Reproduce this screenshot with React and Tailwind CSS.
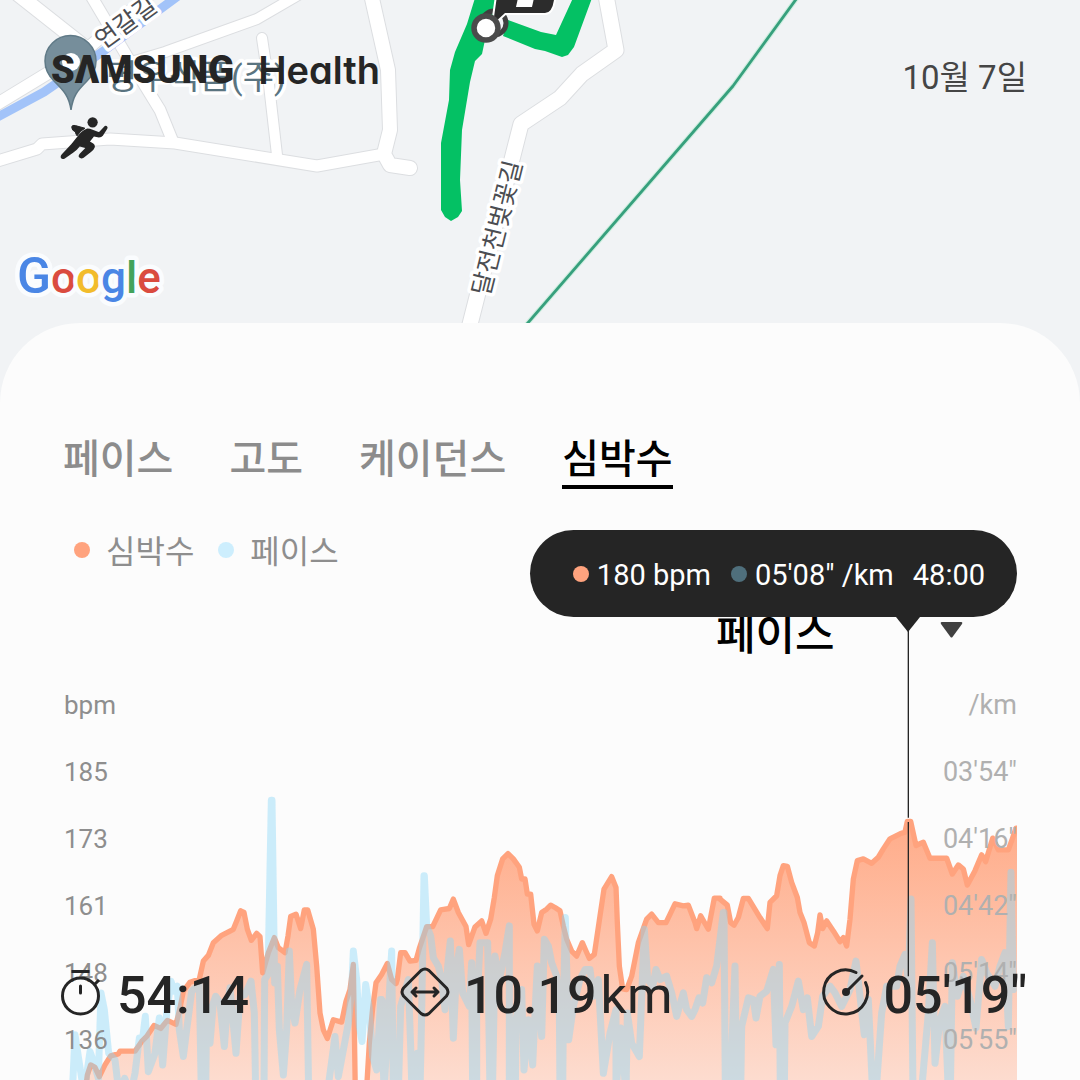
import React from "react";

const TABS = ["페이스", "고도", "케이던스", "심박수"];

const AXIS_ROWS = [
  { bpm: "bpm", pace: "/km" },
  { bpm: "185", pace: "03'54\"" },
  { bpm: "173", pace: "04'16\"" },
  { bpm: "161", pace: "04'42\"" },
  { bpm: "148", pace: "05'14\"" },
  { bpm: "136", pace: "05'55\"" },
];

// Samples come in chunks, each with its own origin on the chart canvas
const HEART_RATE = [
  {
    x: 120,
    y: 0,
    points:
      "135,1240 142,1185 152,1155 165,1162 178,1190 195,1155 212,1128 235,1122 240,1114 285,1114 305,1085 320,1070 342,1037 362,1046 382,1022 408,1034 420,985 430,935 450,908 478,899 490,845 505,828 520,790 545,768 580,750 590,725 602,695 612,700 622,750 634,783 650,762 660,772 668,880 685,820 703,775 715,805 735,820 744,770 752,712 768,705 782,748 793,692 803,692 820,750 830,860 840,1000 850,1050 862,1076 880,1020 905,1027 918,965 930,930 940,855 946,1240 979,1240 988,1090 998,985 1008,910 1025,885 1042,852 1055,900 1068,912",
  },
  {
    x: 1140,
    y: 300,
    points:
      "52,600 62,520 75,520 90,545 108,543 118,507 140,442 158,442 182,392 208,388 220,360 235,400 258,442 266,496 285,443 305,425 318,462 332,420 343,355 352,290 368,240 384,224 400,240 418,265 425,300 435,300 442,345 452,345 462,435 472,455 485,400 500,390 512,378 525,385 540,395 550,440 560,480 575,515 590,530 607,490 618,515 628,537 643,525 660,410 672,330 695,293 708,325 712,430 718,560 728,628 740,630 755,590 765,540 775,490 800,420 815,405 835,430 858,430 885,374 910,380 925,378 945,430 950,448 962,410 985,450 1003,357 1020,357",
  },
  {
    x: 2160,
    y: 300,
    points:
      "0,360 22,378 32,430 42,438 55,415 70,358 85,358 120,415 142,448 150,370 170,350 180,290 190,260 202,262 215,310 232,355 240,400 252,430 268,490 283,500 293,460 300,407 308,448 320,425 340,455 360,487 370,475 380,500 390,420 400,300 412,245 430,240 455,253 475,235 490,210 510,180 540,165 555,160 562,128 572,128 588,200 610,190 630,238 680,238 697,285 715,258 730,270 742,318 765,275 785,228 797,248 818,178 835,213 865,213 877,180 888,148",
  },
];

const PACE = [
  {
    x: 120,
    y: 0,
    points:
      "97,1240 105,1065 115,1130 132,1240 150,1115 162,1150 175,1195 183,940 193,990 206,1120 225,1140 237,1240 254,1195 272,1240 285,1180 298,1075 308,1075 316,1010 325,1175 345,1120 358,1015 368,1155 380,1000 393,905 402,935 412,920 418,1050 430,1130 440,1050 455,935 478,915 484,1240 497,1240 500,980 510,1090 520,970 527,950 540,970 553,1100 562,980 570,925 588,1120 600,950 615,945 633,905 643,1000 647,1240 672,1240 674,900 684,885 694,365 696,365 704,910 712,860 718,1050 730,1185 740,1050 748,815 755,980 765,1030 780,930 800,855 806,1240 862,1240 885,1070 895,1190 925,1030 935,930 940,815 950,900 958,1040 966,1085 977,915 987,980 998,1130 1010,1170 1022,960 1030,1170 1040,1000",
  },
  {
    x: 1140,
    y: 300,
    points:
      "5,660 12,940 25,700 35,515 40,940 55,940 62,680 85,600 92,800 96,940 112,820 120,940 125,700 132,290 133,290 140,440 152,470 160,535 175,560 185,600 195,690 203,560 211,485 220,775 230,560 238,510 248,640 268,680 275,550 278,940 290,900 290,700 300,490 323,490 330,940 338,900 345,530 358,600 375,520 388,440 388,940 406,940 408,720 425,630 432,870 445,720 458,855 465,700 472,560 485,770 493,480 505,500 515,550 530,590 538,680 540,940 548,940 550,700 556,415 566,780 580,680 600,600 615,570 630,570 640,650 655,600 670,880 690,760 708,690 708,940 722,745 738,940 742,700 755,790 778,830 793,450 803,600 818,620 828,570 840,600 860,590 875,640 890,710 910,640 920,690 935,710 945,690 957,655 968,670 980,595 995,610 1010,560 1020,480 1030,400",
  },
  {
    x: 2160,
    y: 300,
    points:
      "12,400 16,940 30,940 45,560 50,940 62,940 65,740 85,655 100,660 108,715 120,650 140,635 160,570 168,795 178,555 181,940 193,940 195,730 215,680 235,605 250,690 262,655 275,770 295,740 308,650 330,620 345,640 365,680 390,630 408,545 420,650 433,765 445,660 458,940 468,940 485,700 500,620 530,620 540,560 555,525 565,600 573,360 579,940 604,940 625,700 637,490 645,850 660,720 675,680 685,940 691,940 697,550 712,650 730,590 750,660 768,745 785,540 800,580 825,620 840,560 855,520 865,740 873,280 880,630",
  },
];

function toLine(chunks) {
  return chunks
    .flatMap((chunk) =>
      chunk.points.split(" ").map((pair) => {
        const [x, y] = pair.split(",").map(Number);
        return `${x + chunk.x} ${y + chunk.y}`;
      })
    )
    .join(" L");
}

const ROADS = [
  { d: "M10 -12 L86 48", w: 14 },
  { d: "M-6 106 L86 50 L150 -6", w: 12 },
  { d: "M90 -6 L128 58 L160 110 L173 142", w: 11 },
  { d: "M118 66 L165 52 L257 19 L300 -6", w: 10 },
  { d: "M262 38 L269 85 L277 155", w: 10 },
  { d: "M-6 162 L37 149 L42 144 L110 139 L175 143 L317 166 L384 154", w: 11 },
  { d: "M371 -6 L388 70 L390 130 L384 154 L390 165 L410 168", w: 14 },
  { d: "M605 -10 L616 50 L582 74 L560 98 L521 124 L466 340", w: 15 },
];

const MAP_FONT = "Roboto, 'Noto Sans CJK KR', sans-serif";

const RouteMap = () => (
  <svg
    className="block h-[400px] w-full [grid-area:1/1]"
    viewBox="0 0 1080 400"
    preserveAspectRatio="xMinYMin slice"
    aria-hidden="true"
  >
    <rect width="1080" height="400" fill="#f1f3f5" />

    {/* Roads and canal */}
    <g fill="none" strokeLinecap="round" strokeLinejoin="round">
      {ROADS.map((road) => (
        <path key={road.d} d={road.d} stroke="#dcdee1" strokeWidth={road.w + 2} />
      ))}
      {ROADS.map((road) => (
        <path key={road.d} d={road.d} stroke="#fff" strokeWidth={road.w} />
      ))}
      <path d="M-6 119 L44 92 L105 50 L178 -4" stroke="#a2c3f9" strokeWidth="9" />
      <path d="M797 -2 L733 86 L500 355" stroke="#cfeee0" strokeWidth="5" />
      <path d="M797 -2 L733 86 L500 355" stroke="#37a07d" strokeWidth="2.8" />
    </g>

    {/* Place names */}
    <g
      fontFamily={MAP_FONT}
      stroke="#fff"
      strokeWidth="7"
      strokeLinejoin="round"
      paintOrder="stroke"
    >
      <text x="103" y="50" fontSize="25" fill="#4b4d52" transform="rotate(-36 103 50)">
        연갈길
      </text>
      <text x="489" y="297" fontSize="25" fill="#4b4d52" transform="rotate(-76 489 297)">
        달전천벚꽃길
      </text>
      <text x="106" y="89" fontSize="34" fill="#5a7480">
        명우식품(주)
      </text>
    </g>

    {/* Place pin */}
    <path
      d="M71 110 C69 96 64 91 54 81 C48 75 45 69 45 61 A25.5 25.5 0 0 1 96 61 C96 69 93 75 87 81 C77 91 73 96 71 110 Z"
      fill="#768e9b"
      stroke="#607a87"
      strokeWidth="1.5"
    />
    <circle cx="71" cy="62" r="9" fill="#fff" />

    {/* Tracked route */}
    <path
      d="M475 -2 L467 24 L455 52 L450 70 L449 100 L441 143 L441 210 L445 217 L451 221 L458 217 L462 211 L460 180 L462 130 L470 82 L475 61 L482 54 L485 40 L500 -2 Z"
      fill="#04c164"
    />
    <path
      d="M508 20 L541 32 L556 35 L573 -2 L592 -2 L574 47 L568 55 L562 57 L545 51 L535 49 L503 36 Z"
      fill="#04c164"
    />
    <circle cx="494" cy="23" r="12" fill="none" stroke="#3f3f3f" strokeWidth="5" />
    <path
      d="M497 -4 L493 24 L505 13 L545 13 Q552 13 554 0 L555 -4 Z"
      fill="#2c2c2c"
      stroke="#fff"
      strokeWidth="4"
      paintOrder="stroke"
      strokeLinejoin="round"
    />
    <path d="M518 -2 L516 7 H532 L534 -2 Z" fill="#fff" />
    <circle cx="486" cy="28" r="12" fill="#fff" stroke="#4b4b4b" strokeWidth="5.5" />

    {/* Map provider */}
    <text
      x="17"
      y="293"
      fontFamily={MAP_FONT}
      fontSize="44"
      fontWeight="500"
      stroke="#fafcfe"
      strokeWidth="9"
      strokeLinejoin="round"
      paintOrder="stroke"
    >
      <tspan fill="#4a86e5" fontSize="50">G</tspan>
      <tspan fill="#da4b3f">o</tspan>
      <tspan fill="#f2bc2c">o</tspan>
      <tspan fill="#4a86e5">g</tspan>
      <tspan fill="#43a35b">l</tspan>
      <tspan fill="#da4b3f">e</tspan>
    </text>
  </svg>
);

const RunnerIcon = () => (
  <svg className="h-[43px] w-[50px]" viewBox="0 0 150 130" fill="#252525" aria-hidden="true">
    <circle cx="101" cy="19" r="15.5" />
    <path
      d="M38 34 C38 28 43 28 49 29 L78 37 Q64 44 54 60 Q50 55 49 48 Q38 44 38 34 Z"
      stroke="#252525"
      strokeWidth="3"
      strokeLinejoin="round"
    />
    <path d="M85 38 Q92 38 103 42 L119 48 Q123 48 125 44 L135 33 Q141 26 146 33 Q147 37 143 42 L132 60 Q128 65 120 65 L105 62 Q99 70 93 77 L103 83 Q110 88 107 96 Q105 102 97 108 L74 126 Q66 131 60 125 Q57 120 62 114 L79 97 L62 92 Q53 104 42 111 L16 129 Q8 132 5 126 Q3 122 8 116 L37 85 L57 60 Q67 45 85 38 Z" />
  </svg>
);

const StopwatchIcon = () => (
  <svg
    className="h-12 w-[42px]"
    viewBox="0 0 42 48"
    fill="none"
    stroke="#252525"
    strokeWidth="3"
    aria-hidden="true"
  >
    <circle cx="19.500" cy="28" r="18" />
    <path d="M10.500 3.500H28.500M33 17L38 12" />
    <path d="M19.500 18V25" strokeLinecap="round" />
  </svg>
);

const DistanceIcon = () => (
  <svg
    className="h-[50px] w-[50px]"
    viewBox="0 0 50 50"
    fill="none"
    stroke="#252525"
    strokeWidth="3"
    strokeLinecap="round"
    strokeLinejoin="round"
    aria-hidden="true"
  >
    <path d="M21 3.500 Q25 0.500 29 3.500 L46.500 21 Q49.500 25 46.500 29 L29 46.500 Q25 49.500 21 46.500 L3.500 29 Q0.500 25 3.500 21 Z" />
    <path d="M12 25H38M16 21L12 25L16 29M34 21L38 25L34 29" />
  </svg>
);

const PaceIcon = () => (
  <svg
    className="h-12 w-[46px] overflow-visible"
    viewBox="1 0 46 48"
    fill="none"
    stroke="#252525"
    strokeWidth="3"
    strokeLinecap="round"
    aria-hidden="true"
  >
    <path d="M34 4.500A22 22 0 1 0 43.500 14.500" />
    <path d="M24 24L40 8" />
    <circle cx="24" cy="24" r="2.500" fill="#252525" />
  </svg>
);

const Chart = () => {
  const heartLine = toLine(HEART_RATE);

  return (
    <svg
      className="block h-full w-full overflow-visible [grid-area:1/1]"
      viewBox="192 -24 2859 1224"
      preserveAspectRatio="none"
      role="img"
      aria-label="심박수, 페이스"
    >
      <defs>
        <linearGradient id="heartFill" gradientUnits="userSpaceOnUse" x1="0" y1="420" x2="0" y2="1200">
          <stop offset="0" stopColor="#ffab88" />
          <stop offset="1" stopColor="#fddccf" />
        </linearGradient>
        <clipPath id="plotArea">
          <rect x="192" y="-24" width="2859" height="1224" />
        </clipPath>
      </defs>
      <g clipPath="url(#plotArea)" strokeLinejoin="round">
        <path d={`M${heartLine} L3051 448 L3051 1240 Z`} fill="url(#heartFill)" />
        <path d={`M${heartLine} L3051 448`} fill="none" stroke="#ffa37e" strokeWidth="16" />
        <path
          d={`M${toLine(PACE)}`}
          fill="none"
          stroke="#8bd7f8"
          strokeOpacity="0.43"
          strokeWidth="21"
          strokeLinecap="round"
        />
      </g>
      {/* Selected moment */}
      <path d="M2725 -160V417M2725 430V890" stroke="#252525" strokeWidth="4" />
    </svg>
  );
};

const LegendItem = ({ dotClass, label }) => (
  <li className="flex items-center gap-4">
    <span className={`h-4 w-4 rounded-full ${dotClass}`} />
    <span className="pt-1">{label}</span>
  </li>
);

const Tooltip = () => (
  <div className="absolute top-0 right-[63px] z-10" role="tooltip">
    <div className="flex h-[87px] items-center rounded-full bg-[#252525] pr-8 pl-[43px] text-[29px] leading-[32px] whitespace-nowrap text-white">
      <span className="mr-2 h-4 w-4 rounded-full bg-[#ffa37e]" />
      <span className="mr-5 pt-0.5">180 bpm</span>
      <span className="mr-2 h-4 w-4 rounded-full bg-[#4f6f7c]" />
      <span className="mr-[19px] pt-0.5">05'08" /km</span>
      <span className="pt-0.5">48:00</span>
    </div>
    <svg className="absolute top-full right-[97px] h-[15px] w-6" viewBox="0 0 24 15" aria-hidden="true">
      <path d="M0 0H24L12 15Z" fill="#252525" />
    </svg>
  </div>
);

const Stat = ({ icon, value, unit }) => (
  <div className="flex items-center gap-3.5">
    {icon}
    <span className="pt-2 text-[52px] leading-[60px] font-medium">
      {value}
      {unit && <span className="ml-1 font-normal">{unit}</span>}
    </span>
  </div>
);

export default function App() {
  return (
    <main className="flex min-h-screen flex-col overflow-hidden bg-[#f1f3f5] font-['Roboto','Noto_Sans_CJK_KR',sans-serif] text-[#252525]">
      <header className="grid">
        <RouteMap />
        <div className="z-10 flex items-start justify-between pt-12 pr-[53px] pl-[51px] [grid-area:1/1]">
          <div>
            <h1 className="flex items-center gap-6 text-[38px] leading-[44px]">
              <span className="font-black" aria-label="SAMSUNG">
                SΛMSUNG
              </span>
              <span className="font-['Inter',sans-serif] font-semibold [font-feature-settings:'cv11']">
                Health
              </span>
            </h1>
            <div className="mt-6 ml-2">
              <RunnerIcon />
            </div>
          </div>
          <time className="mt-2 text-[33px] leading-[44px] text-[#454545]">10월 7일</time>
        </div>
      </header>

      <section className="z-10 -mt-[77px] flex grow flex-col rounded-t-[80px] bg-[#fcfcfc] pt-[113px]">
        <nav className="flex gap-14 px-[63px]" role="tablist">
          {TABS.map((tab) => {
            const active = tab === "심박수";
            return (
              <button
                key={tab}
                type="button"
                role="tab"
                aria-selected={active}
                className={`border-b-4 pb-0.5 text-[40px] leading-[47px] font-medium ${
                  active ? "border-black text-black" : "border-transparent text-[#8c8c8c]"
                }`}
              >
                {tab}
              </button>
            );
          })}
        </nav>

        <div className="relative mt-[41px]">
          <ul className="flex h-10 gap-6 pl-[74px] text-[32px] leading-[36px] text-[#8e8e8e]">
            <LegendItem dotClass="bg-[#ffa37e]" label="심박수" />
            <LegendItem dotClass="bg-[#cdeefd]" label="페이스" />
          </ul>
          <Tooltip />
          <div className="mt-10 flex justify-end pr-[117px]">
            <div className="relative w-[247px]">
              <select
                aria-label="비교 항목"
                className="block w-full appearance-none bg-transparent text-[43px] leading-[50px] font-medium text-black"
              >
                <option>페이스</option>
              </select>
              <svg
                className="pointer-events-none absolute top-3 right-0 h-4 w-[23px]"
                viewBox="0 0 23 16"
                aria-hidden="true"
              >
                <path d="M1.500 0H21.500Q23 0.500 22 2L12.500 15Q11.500 16 10.500 15L1 2Q0 0.500 1.500 0Z" fill="#404040" />
              </svg>
            </div>
          </div>
        </div>

        <div className="mt-2.5 grid grow">
          <div className="grid pr-[63px] pl-16 [grid-area:1/1]">
            <Chart />
            <ul className="z-10 pt-0.5 text-[26px] leading-[67px] [grid-area:1/1]">
              {AXIS_ROWS.map((row) => (
                <li key={row.bpm} className="flex h-[67px] justify-between">
                  <span className="text-[#8e8e8e]">{row.bpm}</span>
                  <span className="text-[27px] text-[#b0b0b0]">{row.pace}</span>
                </li>
              ))}
            </ul>
          </div>
          <footer className="z-20 flex items-center justify-between self-end pr-[53px] pb-[54px] pl-[61px] [grid-area:1/1]">
            <Stat icon={<StopwatchIcon />} value="54:14" />
            <Stat icon={<DistanceIcon />} value="10.19" unit="km" />
            <Stat icon={<PaceIcon />} value={"05'19\""} />
          </footer>
        </div>
      </section>
    </main>
  );
}
